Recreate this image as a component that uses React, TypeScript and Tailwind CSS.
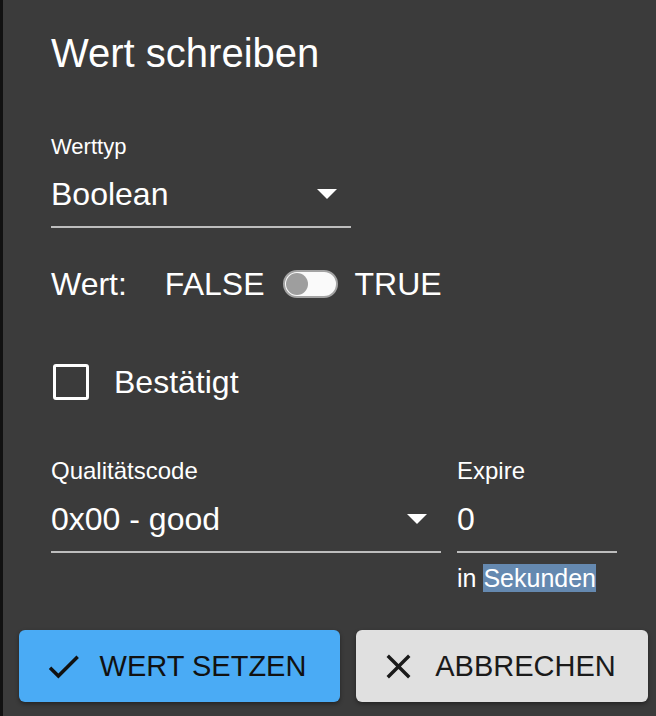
import { useState } from "react";

function ArrowDown() {
  return (
    <svg width="20" height="10" viewBox="0 0 20 10" className="shrink-0">
      <path d="M0 0h20L10 10z" fill="#ffffff" />
    </svg>
  );
}

export default function App() {
  const [value, setValue] = useState(false);
  const [confirmed, setConfirmed] = useState(false);

  return (
    <div className="w-[656px] h-[716px] flex bg-[#111111] overflow-hidden font-['Liberation_Sans',Arial,sans-serif] text-white">
      <div className="ml-[3px] flex-1 flex flex-col bg-[#3b3b3b]">
        {/* Inhalt */}
        <div className="pl-[48px] flex flex-col">
          <h1 className="mt-[29px] text-[40px] leading-[48px] font-normal">
            Wert schreiben
          </h1>

          {/* Werttyp */}
          <div className="mt-[56px] w-[300px] flex flex-col">
            <label className="text-[22px] leading-[28px]">Werttyp</label>
            <div className="mt-[13px] pb-[12px] border-b-2 border-[#bdbdbd] flex items-center justify-between pr-[14px]">
              <span className="text-[32px] leading-[40px]">Boolean</span>
              <ArrowDown />
            </div>
          </div>

          {/* Wert */}
          <div className="mt-[36px] flex items-center text-[32px] leading-[40px]">
            <span>Wert:</span>
            <span className="ml-[38px]">FALSE</span>
            <button
              onClick={() => setValue(!value)}
              className={
                "ml-[19px] w-[55px] h-[28px] rounded-full bg-[#fafafa] border-2 border-[#a3a3a3] flex items-center px-[1px] " +
                (value ? "justify-end" : "justify-start")
              }
            >
              <span className="w-[22px] h-[22px] rounded-full bg-[#9e9e9e]" />
            </button>
            <span className="ml-[16px]">TRUE</span>
          </div>

          {/* Bestätigt */}
          <div
            className="mt-[58px] flex items-center cursor-pointer"
            onClick={() => setConfirmed(!confirmed)}
          >
            <span className="ml-[2px] w-[36px] h-[36px] border-[3px] border-white rounded-[3px] flex items-center justify-center">
              {confirmed && <span className="w-[20px] h-[20px] bg-white" />}
            </span>
            <span className="ml-[25px] text-[32px] leading-[40px]">Bestätigt</span>
          </div>

          {/* Qualitätscode + Expire */}
          <div className="mt-[55px] flex gap-4">
            <div className="w-[390px] flex flex-col">
              <label className="text-[24px] leading-[28px]">Qualitätscode</label>
              <div className="mt-[14px] pb-[12px] border-b-2 border-[#bdbdbd] flex items-center justify-between pr-[14px]">
                <span className="text-[32px] leading-[40px]">0x00 - good</span>
                <ArrowDown />
              </div>
            </div>
            <div className="w-[160px] flex flex-col">
              <label className="text-[24px] leading-[28px]">Expire</label>
              <div className="mt-[14px] pb-[12px] border-b-2 border-[#bdbdbd]">
                <span className="text-[32px] leading-[40px]">0</span>
              </div>
              <p className="mt-[5px] text-[25px] leading-[40px] whitespace-nowrap">
                in <span className="bg-[#6589b0]">Sekunden</span>
              </p>
            </div>
          </div>
        </div>

        {/* Aktionen */}
        <div className="mt-[32px] pl-[16px] pr-[8px] flex gap-4">
          <button className="w-[321px] h-[72px] rounded-[6px] bg-[#4aabf5] shadow-[0_2px_4px_rgba(0,0,0,0.4)] flex items-center justify-center gap-[16px] pr-[10px] text-[#111111]">
            <svg width="41" height="41" viewBox="0 0 24 24" fill="currentColor">
              <path d="M9 16.17 4.83 12l-1.42 1.41L9 19 21 7l-1.41-1.41z" />
            </svg>
            <span className="text-[29px] leading-[40px]">WERT SETZEN</span>
          </button>
          <button className="flex-1 h-[72px] rounded-[6px] bg-[#e0e0e0] shadow-[0_2px_4px_rgba(0,0,0,0.4)] flex items-center justify-center gap-[16px] pr-[10px] text-[#1a1a1a]">
            <svg width="41" height="41" viewBox="0 0 24 24" fill="currentColor">
              <path d="M19 6.41 17.59 5 12 10.59 6.41 5 5 6.41 10.59 12 5 17.59 6.41 19 12 13.41 17.59 19 19 17.59 13.41 12z" />
            </svg>
            <span className="text-[29px] leading-[40px]">ABBRECHEN</span>
          </button>
        </div>
      </div>
    </div>
  );
}
